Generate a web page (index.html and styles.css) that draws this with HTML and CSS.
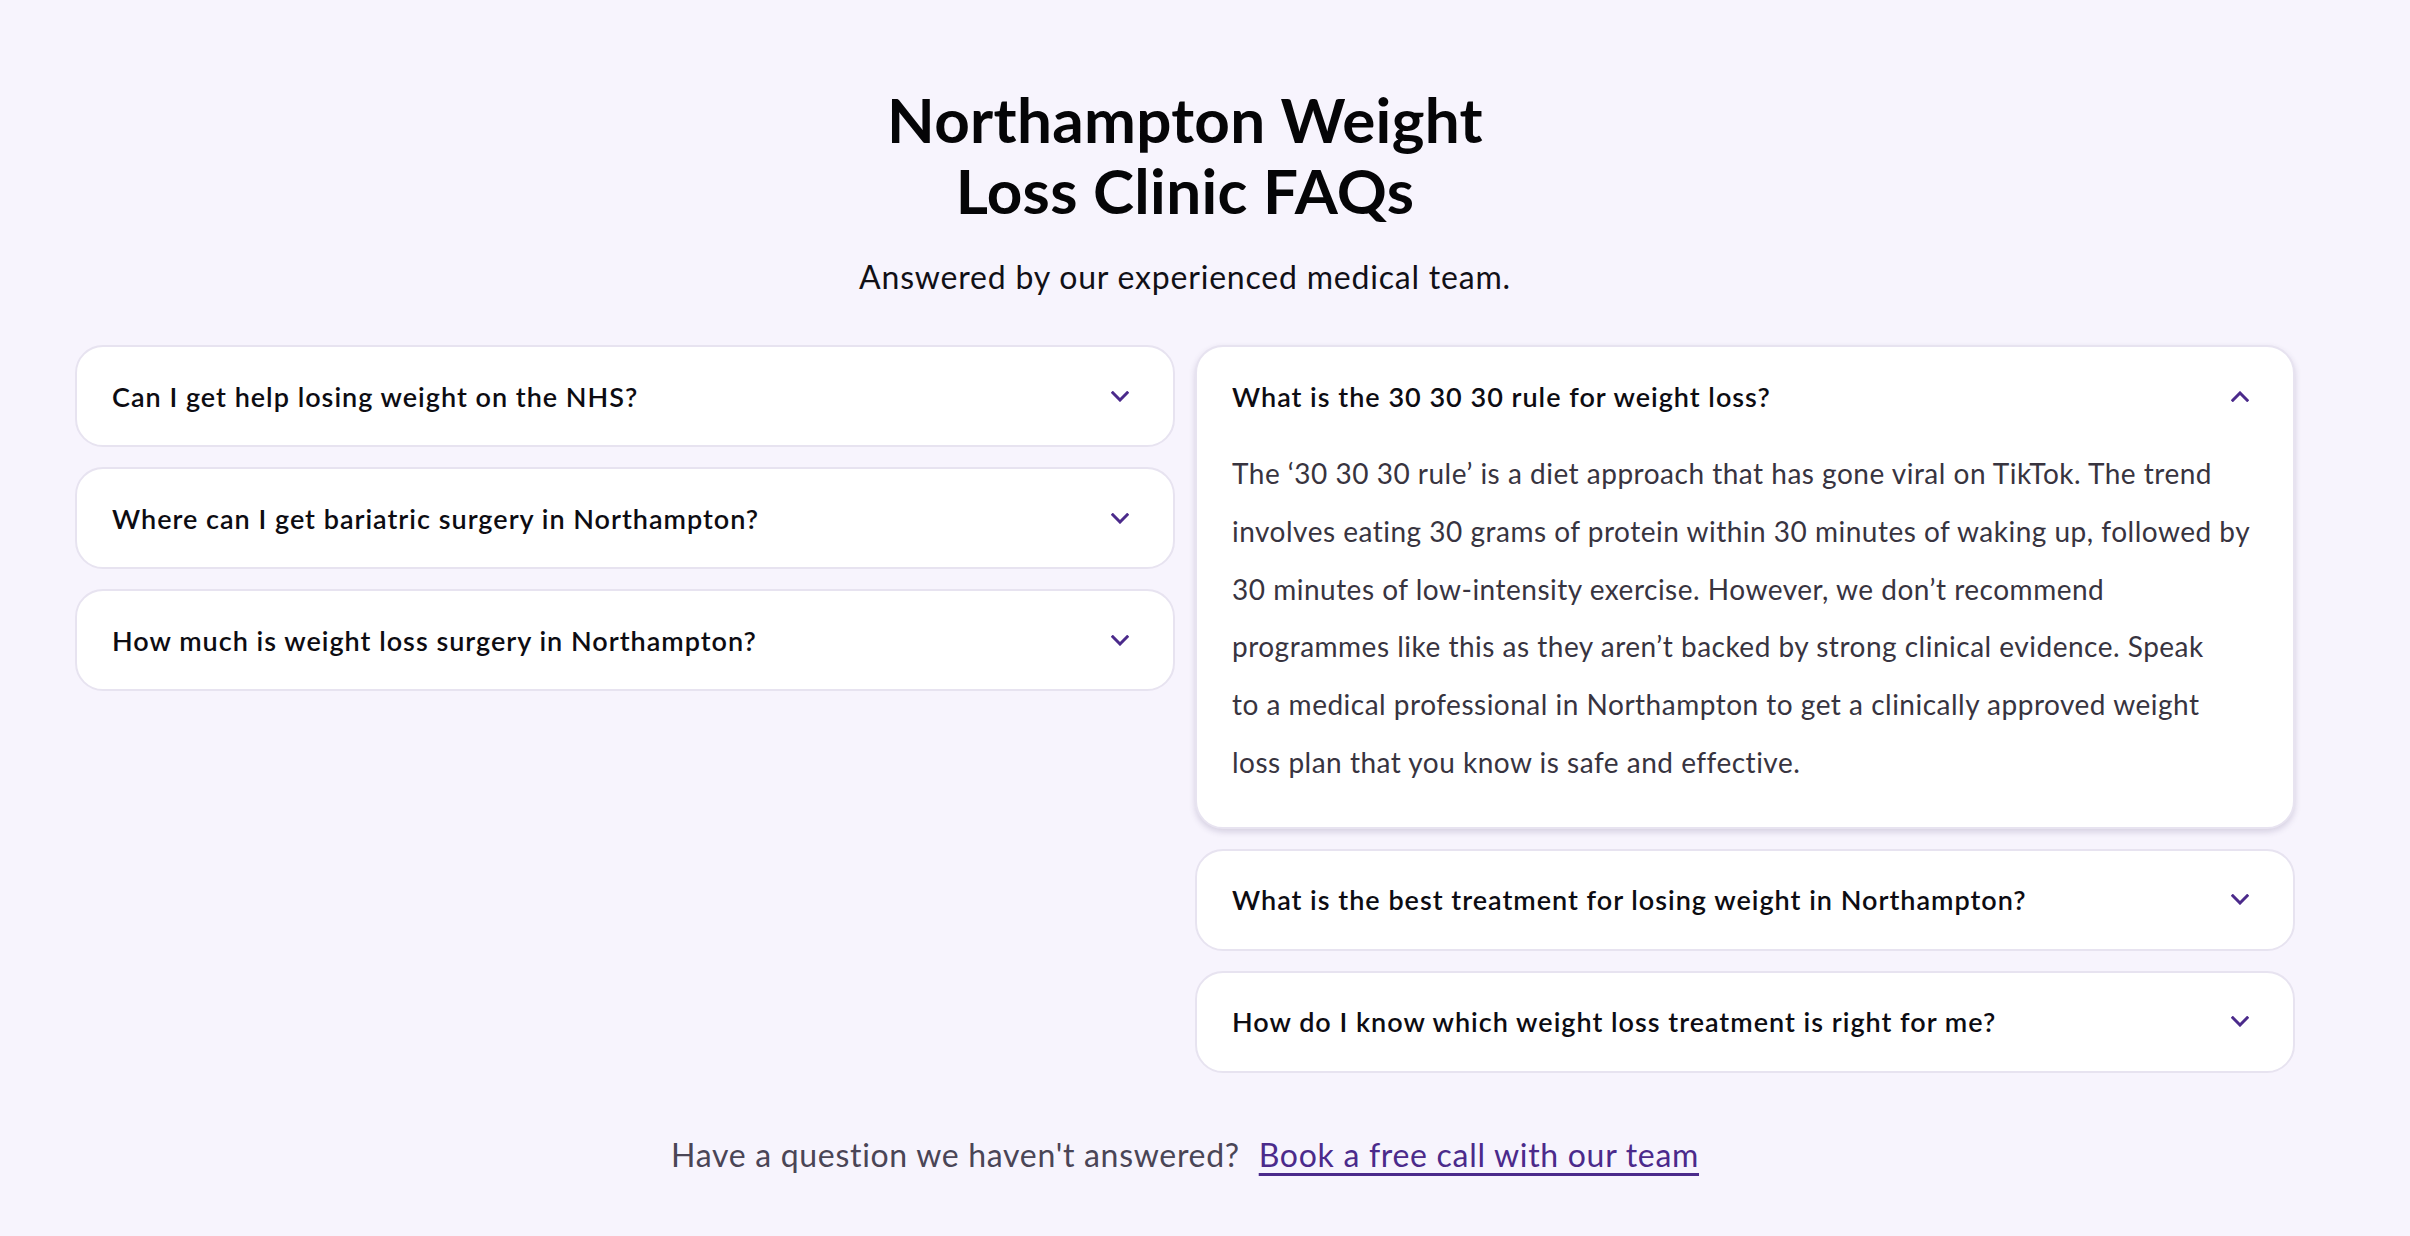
FILE: index.html
```html
<!DOCTYPE html>
<html lang="en">
<head>
<meta charset="utf-8">
<title>Northampton Weight Loss Clinic FAQs</title>
<link rel="stylesheet" href="styles.css">
</head>
<body>
<main class="faq">
  <header class="faq-head">
    <h1 class="faq-title">Northampton Weight<br>Loss Clinic FAQs</h1>
    <p class="faq-sub">Answered by our experienced medical team.</p>
  </header>

  <div class="faq-grid">
    <div class="faq-col">
      <div class="item">
        <div class="q"><span>Can I get help losing weight on the NHS?</span>
          <svg class="chev" width="18" height="11" viewBox="0 0 18 11"><polyline points="1.8,1.8 9,9 16.2,1.8"/></svg>
        </div>
      </div>
      <div class="item">
        <div class="q"><span>Where can I get bariatric surgery in Northampton?</span>
          <svg class="chev" width="18" height="11" viewBox="0 0 18 11"><polyline points="1.8,1.8 9,9 16.2,1.8"/></svg>
        </div>
      </div>
      <div class="item">
        <div class="q"><span>How much is weight loss surgery in Northampton?</span>
          <svg class="chev" width="18" height="11" viewBox="0 0 18 11"><polyline points="1.8,1.8 9,9 16.2,1.8"/></svg>
        </div>
      </div>
    </div>

    <div class="faq-col">
      <div class="item open">
        <div class="q"><span>What is the 30 30 30 rule for weight loss?</span>
          <svg class="chev" width="18" height="11" viewBox="0 0 18 11"><polyline points="1.8,9.2 9,2 16.2,9.2"/></svg>
        </div>
        <p class="a">The ‘30 30 30 rule’ is a diet approach that has gone viral on TikTok. The trend<br>involves eating 30 grams of protein within 30 minutes of waking up, followed by<br>30 minutes of low-intensity exercise. However, we don’t recommend<br>programmes like this as they aren’t backed by strong clinical evidence. Speak<br>to a medical professional in Northampton to get a clinically approved weight<br>loss plan that you know is safe and effective.</p>
      </div>
      <div class="item">
        <div class="q"><span>What is the best treatment for losing weight in Northampton?</span>
          <svg class="chev" width="18" height="11" viewBox="0 0 18 11"><polyline points="1.8,1.8 9,9 16.2,1.8"/></svg>
        </div>
      </div>
      <div class="item">
        <div class="q"><span>How do I know which weight loss treatment is right for me?</span>
          <svg class="chev" width="18" height="11" viewBox="0 0 18 11"><polyline points="1.8,1.8 9,9 16.2,1.8"/></svg>
        </div>
      </div>
    </div>
  </div>

  <p class="faq-foot">Have a question we haven't answered? <a class="foot-link" href="#">Book a free call with our team</a></p>
</main>
</body>
</html>
```

FILE: styles.css
```css
html, body {
  margin: 0;
  padding: 0;
}
body {
  background: #f7f4fd;
  font-family: "Lato", "Noto Sans", sans-serif;
  color: #0c0b10;
}
.faq {
  width: 2220px;
  margin-left: 75px;
  padding-top: 84px;
  padding-bottom: 60px;
}
.faq-head {
  text-align: center;
}
.faq-title {
  margin: 0;
  font-size: 62px;
  line-height: 71px;
  font-weight: 700;
  letter-spacing: 0.3px;
  color: #050507;
}
.faq-sub {
  margin: 30px 0 0;
  font-size: 32px;
  line-height: 42px;
  font-weight: 400;
  letter-spacing: 0.8px;
  color: #111016;
}
.faq-grid {
  margin-top: 47px;
  display: grid;
  grid-template-columns: 1fr 1fr;
  column-gap: 20px;
  align-items: start;
}
.faq-col {
  display: flex;
  flex-direction: column;
  gap: 20px;
}
.item {
  background: #ffffff;
  border: 2px solid #e7e3f0;
  border-radius: 28px;
}
.item.open {
  box-shadow: 0 3px 6px rgba(60, 45, 100, 0.18);
}
.q {
  display: flex;
  align-items: center;
  justify-content: space-between;
  padding: 0 44px 0 35px;
  height: 98px;
  font-size: 27px;
  font-weight: 600;
  letter-spacing: 1px;
  color: #0d0c12;
}
.chev {
  flex: none;
  fill: none;
  stroke: #4b2a8b;
  stroke-width: 3;
  stroke-linecap: square;
}
.a {
  margin: 0;
  padding: 0 20px 35px 35px;
  font-size: 28px;
  line-height: 57.8px;
  font-weight: 400;
  letter-spacing: 0.5px;
  white-space: nowrap;
  color: #38343f;
}
.faq-foot {
  margin: 61px 0 0;
  text-align: center;
  font-size: 32px;
  line-height: 42px;
  letter-spacing: 0.7px;
  color: #4a4556;
}
.foot-link {
  margin-left: 10px;
  color: #4b2a8b;
  text-decoration: underline;
  text-decoration-thickness: 3px;
  text-underline-offset: 6px;
}
```
